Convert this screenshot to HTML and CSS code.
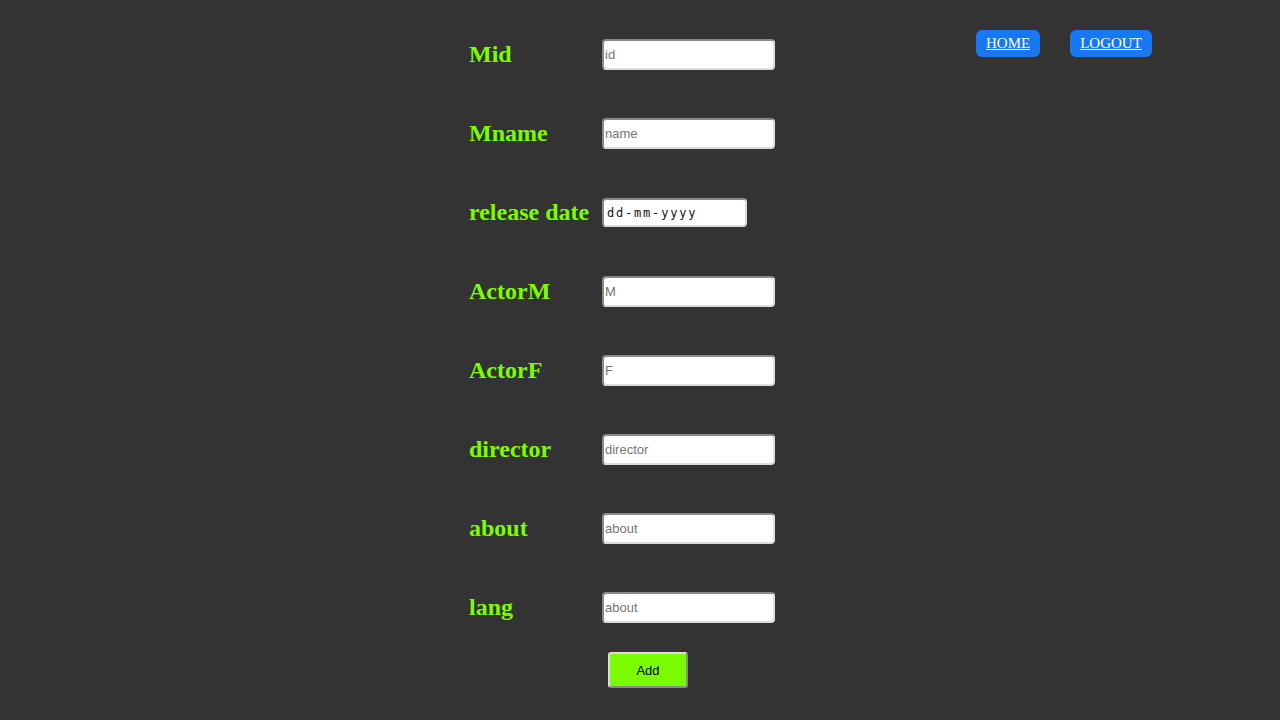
FILE: index.html
```html
<!DOCTYPE html>
<html>
<head>
<meta charset="utf-8">
<link rel="stylesheet" href="styles.css">
</head>
<body>
<nav class="nav">
  <a class="navbtn" href="#">HOME</a>
  <a class="navbtn" href="#">LOGOUT</a>
</nav>
<form class="form">
  <div class="row"><label class="lbl">Mid</label><input class="field" type="text" placeholder="id"></div>
  <div class="row"><label class="lbl">Mname</label><input class="field" type="text" placeholder="name"></div>
  <div class="row"><label class="lbl">release date</label><input class="field date" type="text" value="dd-mm-yyyy" readonly></div>
  <div class="row"><label class="lbl">ActorM</label><input class="field" type="text" placeholder="M"></div>
  <div class="row"><label class="lbl">ActorF</label><input class="field" type="text" placeholder="F"></div>
  <div class="row"><label class="lbl">director</label><input class="field" type="text" placeholder="director"></div>
  <div class="row"><label class="lbl">about</label><input class="field" type="text" placeholder="about"></div>
  <div class="row"><label class="lbl">lang</label><input class="field" type="text" placeholder="about"></div>
  <div class="actions"><button class="add" type="button">Add</button></div>
</form>
</body>
</html>
```
FILE: styles.css
```css
html, body {
  margin: 0;
  padding: 0;
  background: #333333;
  height: 100%;
}
body {
  position: relative;
  font-family: "Liberation Serif", serif;
}
.nav {
  position: absolute;
  top: 30px;
  left: 976px;
  display: flex;
  gap: 30px;
}
.navbtn {
  display: block;
  height: 27px;
  line-height: 27px;
  padding: 0 10px;
  background: #1877f2;
  color: #ffffff;
  border-radius: 6px;
  font-family: "Liberation Serif", serif;
  font-size: 15px;
  text-decoration: underline;
}
.form {
  width: 342px;
  margin: 0 auto;
  padding-top: 39px;
  display: flex;
  flex-direction: column;
}
.row {
  display: flex;
  align-items: center;
  height: 31px;
  margin-bottom: 48px;
}
.row:nth-child(8) {
  margin-bottom: 29px;
}
.lbl {
  width: 133px;
  color: #7cfc00;
  font-family: "Liberation Serif", serif;
  font-weight: bold;
  font-size: 24px;
  line-height: 31px;
}
.field {
  box-sizing: border-box;
  width: 173px;
  height: 31px;
  margin: 0;
  padding: 0 1px;
  background: #ffffff;
  border: 2px solid;
  border-color: #8a8a8a #dcdcdc #dcdcdc #8a8a8a;
  border-radius: 4px;
  font-family: "Liberation Sans", Arial, sans-serif;
  font-size: 13px;
  color: #000;
  outline: none;
}
.field::placeholder {
  color: #757575;
}
.date {
  width: 145px;
  height: 29px;
  padding-left: 3px;
  font-family: "DejaVu Sans Mono", monospace;
  font-size: 12px;
  letter-spacing: 1.8px;
  color: #111;
}
.actions {
  display: flex;
  padding-left: 139px;
}
.add {
  box-sizing: border-box;
  width: 80px;
  height: 36px;
  background: #7cfc00;
  border: 2px solid;
  border-color: #dcdcdc #8a8a8a #8a8a8a #dcdcdc;
  border-radius: 3px;
  font-family: "Liberation Sans", Arial, sans-serif;
  font-size: 13px;
  color: #000;
  padding: 0;
}
```
